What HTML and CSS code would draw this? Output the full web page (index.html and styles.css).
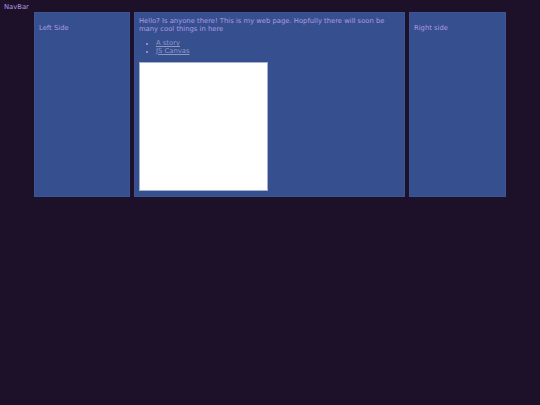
FILE: index.html
```html
<!DOCTYPE html>
<html>
<head>
<meta charset="utf-8">
<link rel="stylesheet" href="styles.css">
</head>
<body>
<div class="nav">NavBar</div>
<div class="layout">
  <div class="panel side"><p class="label">Left Side</p></div>
  <div class="panel main">
    <p class="intro">Hello? Is anyone there! This is my web page. Hopfully there will soon be many cool things in here</p>
    <ul class="links">
      <li><a href="#">A story</a></li>
      <li><a href="#">JS Canvas</a></li>
    </ul>
    <div class="canvas"></div>
  </div>
  <div class="panel side right"><p class="label">Right side</p></div>
</div>
</body>
</html>
```
FILE: styles.css
```css
html, body {
  margin: 0;
  padding: 0;
  background: #1d1029;
  font-family: "DejaVu Sans", sans-serif;
  font-size: 6.8px;
  line-height: 8px;
  color: #b09ae4;
}
.nav {
  height: 12px;
  padding-left: 4px;
  line-height: 14px;
}
.layout {
  display: flex;
  justify-content: center;
  gap: 4px;
}
.panel {
  box-sizing: border-box;
  background: #36508f;
  border: 1px solid #3d5596;
  padding: 4px 4px 5px;
}
.side { width: 96px; }
.right { width: 97px; }
.main { width: 271px; }
.label { margin: 7px 0 0; }
.intro { margin: 0; }
.links {
  margin: 7px 0 7px;
  padding-left: 17px;
}
.links li { line-height: 7.5px; }
.links li::marker { font-size: 5px; }
.links a { color: #8f96c4; }
.canvas {
  box-sizing: border-box;
  width: 129px;
  height: 129px;
  background: #fff;
  border: 1px solid #a6b0cf;
}
```
